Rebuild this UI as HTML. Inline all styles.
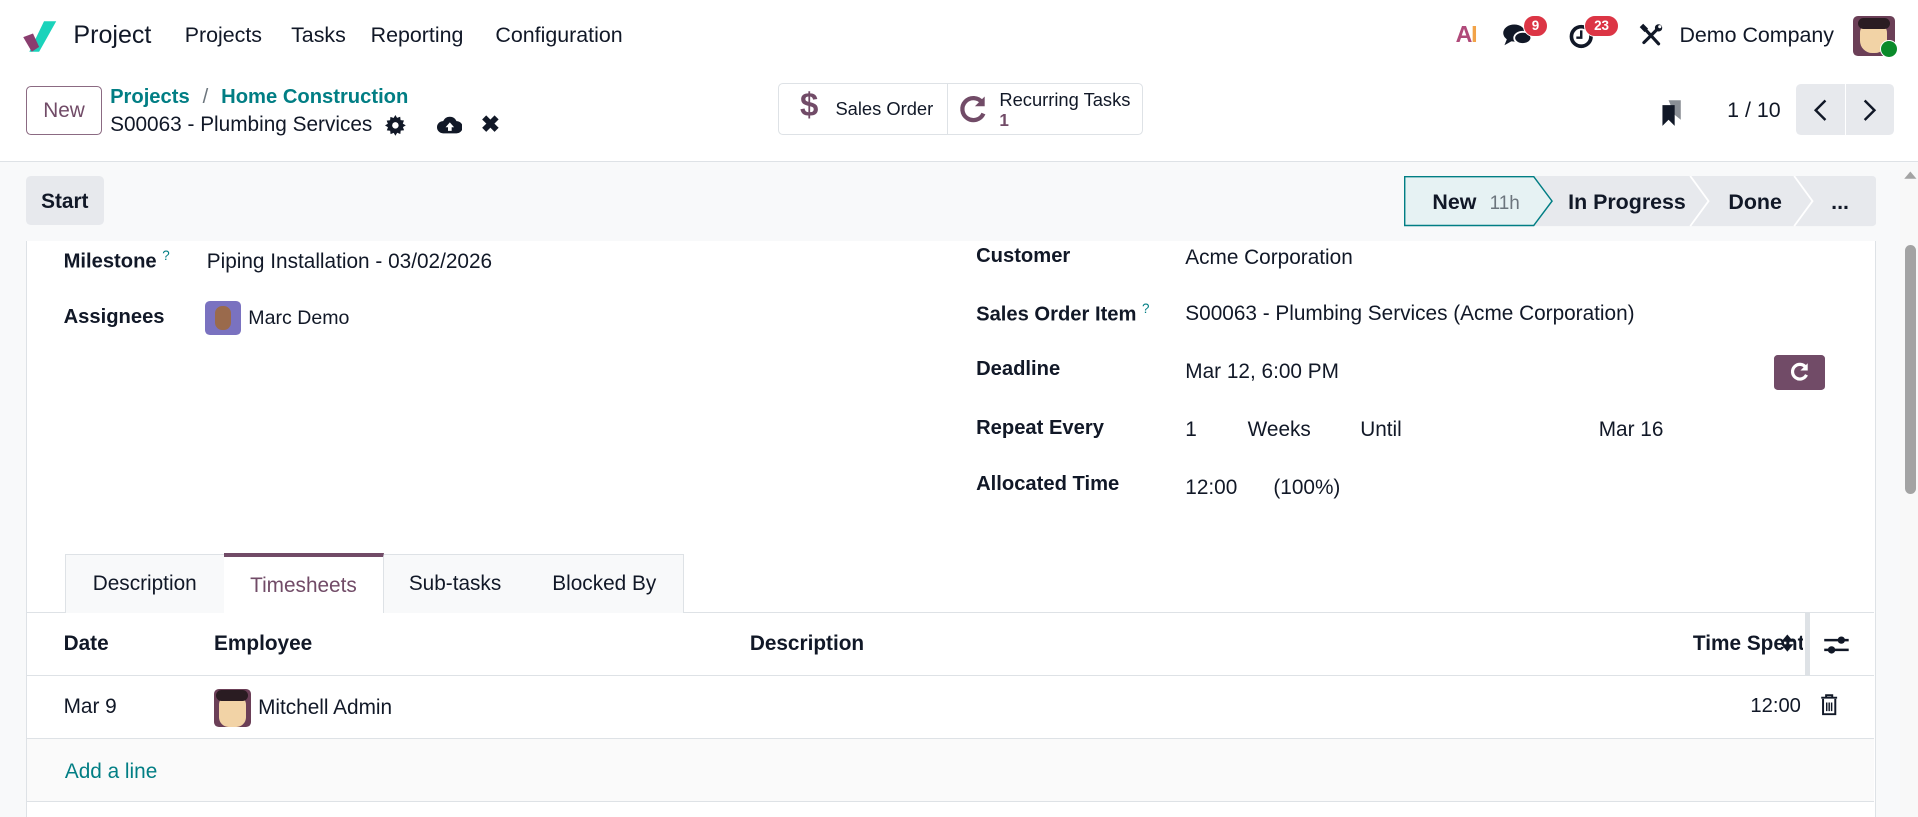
<!DOCTYPE html>
<html><head><meta charset="utf-8">
<style>
html,body{margin:0;padding:0;background:#fff;overflow:hidden}
body{width:1918px;height:817px}
#w{zoom:1.22321;width:1568px;height:668px;position:relative;font-family:"Liberation Sans",sans-serif;color:#111827;font-size:16.5px;overflow:hidden}
.a{position:absolute;white-space:nowrap}
.b{font-weight:bold}
.teal{color:#017E84}
.nav{font-size:17.5px;top:19px}
.badge{position:absolute;background:#dc3545;color:#fff;font-size:11px;font-weight:bold;border-radius:9px;height:17px;line-height:17px;text-align:center;border:1.5px solid #fff}
.lbl{font-weight:bold;font-size:16.5px}
</style></head><body><div id="w">
<!-- navbar -->
<svg class="a" style="left:18px;top:16px" width="30" height="27" viewBox="0 0 30 27"><path d="M18 1 L28 1 L14 26 L6 26 Z" fill="#1ad3bb"/><path d="M1 14 L9 11 L14 22 L8 26 Z" fill="#8a3e6f"/></svg>
<div class="a" style="left:60px;top:17px;font-size:20.5px">Project</div>
<div class="a nav" style="left:151px">Projects</div>
<div class="a nav" style="left:238px">Tasks</div>
<div class="a nav" style="left:303px">Reporting</div>
<div class="a nav" style="left:405px">Configuration</div>
<div class="a b" style="left:1190px;top:17px;font-size:19px;color:#b04a7a;letter-spacing:-1px">A<span style="color:#f2a348">I</span></div>
<svg class="a" style="left:1228px;top:18px" width="26" height="22" viewBox="0 0 26 22"><ellipse cx="10" cy="9" rx="9" ry="7" fill="#111827"/><path d="M4 14 L2 19 L9 15Z" fill="#111827"/><ellipse cx="17" cy="13" rx="7" ry="5" fill="#111827" stroke="#fff" stroke-width="1.5"/></svg>
<div class="badge" style="left:1245px;top:12px;width:19px">9</div>
<svg class="a" style="left:1283px;top:19px" width="22" height="22" viewBox="0 0 22 22"><circle cx="10" cy="11" r="8" fill="none" stroke="#111827" stroke-width="3"/><path d="M10 6 V12 H6" stroke="#111827" stroke-width="2" fill="none"/></svg>
<div class="badge" style="left:1295px;top:12px;width:27px">23</div>
<svg class="a" style="left:1340px;top:19px" width="20" height="20" viewBox="0 0 20 20"><path d="M4 4 L16 17" stroke="#111827" stroke-width="2.6" stroke-linecap="round"/><path d="M2 2 L6 6" stroke="#111827" stroke-width="4"/><path d="M15 5 L4 16" stroke="#111827" stroke-width="2.6" stroke-linecap="round"/><circle cx="16" cy="4" r="3" fill="#111827"/><circle cx="17" cy="3" r="1.3" fill="#fff"/></svg>
<div class="a" style="left:1373px;top:19px;font-size:17.5px">Demo Company</div>
<div class="a" style="left:1515px;top:13px;width:34px;height:33px;border-radius:4px;background:#6b3f57"><div style="position:absolute;left:6px;top:6px;width:22px;height:24px;background:#f2d3a6;border-radius:8px 8px 10px 10px"></div><div style="position:absolute;left:4px;top:2px;width:26px;height:9px;background:#2a1c22;border-radius:6px"></div></div>
<div class="a" style="left:1537px;top:33px;width:13px;height:13px;border-radius:50%;background:#0a8a2a;border:1.5px solid #fff"></div>
<!-- control panel -->
<div class="a" style="left:21px;top:70px;width:61px;height:39px;border:1px solid #8b6a82;border-radius:4px;color:#714B67;font-size:17px;text-align:center;line-height:39px">New</div>
<div class="a teal" style="left:90px;top:70px;font-size:16.5px;font-weight:bold">Projects <span style="color:#6c757d;font-weight:normal;margin:0 6px">/</span> Home Construction</div>
<div class="a" style="left:90px;top:92px;font-size:17px">S00063 - Plumbing Services</div>
<svg class="a" style="left:315px;top:94px" width="17" height="17" viewBox="0 0 16 16"><path d="M8 0l1.3 2.2 2.4-.9.3 2.6 2.6.3-.9 2.4L16 8l-2.2 1.3.9 2.4-2.6.3-.3 2.6-2.4-.9L8 16l-1.3-2.2-2.4.9-.3-2.6-2.6-.3.9-2.4L0 8l2.2-1.3-.9-2.4 2.6-.3.3-2.6 2.4.9Z" fill="#111827"/><circle cx="8" cy="8" r="2.5" fill="#fff"/></svg>
<svg class="a" style="left:357px;top:94px" width="21" height="16" viewBox="0 0 21 16"><path d="M5 15 A5 5 0 0 1 5 5 A6 6 0 0 1 16 5 A5 5 0 0 1 16 15Z" fill="#111827"/><path d="M10.5 6 L14 10 H12 V13 H9 V10 H7Z" fill="#fff"/></svg>
<div class="a b" style="left:393px;top:91px;font-size:19px">✖</div>
<div class="a" style="left:636px;top:68px;width:297px;height:41px;border:1px solid #dee2e6;border-radius:4px"></div>
<div class="a" style="left:774px;top:69px;width:1px;height:41px;background:#dee2e6"></div>
<div class="a b" style="left:654px;top:70px;font-size:27px;color:#714B67">$</div>
<div class="a" style="left:683px;top:80px;font-size:15px">Sales Order</div>
<svg class="a" style="left:784px;top:77px" width="24" height="24" viewBox="0 0 24 24"><path d="M19 7 A9 9 0 1 0 20 16" fill="none" stroke="#714B67" stroke-width="3.5"/><path d="M21 2 V10 H13Z" fill="#714B67"/></svg>
<div class="a" style="left:817px;top:73px;font-size:15px">Recurring Tasks</div>
<div class="a b" style="left:817px;top:91px;font-size:14px;color:#714B67">1</div>
<svg class="a" style="left:1357px;top:81px" width="20" height="22" viewBox="0 0 20 22"><path d="M7 1 H17 V17 L12 13Z" fill="#8a8f96"/><path d="M2 5 H12 V22 L7 17 L2 22Z" fill="#111827"/></svg>
<div class="a" style="left:1412px;top:80px;font-size:17.5px">1 / 10</div>
<div class="a" style="left:1468px;top:69px;width:80px;height:41px;background:#e7e9ed;border-radius:4px"></div>
<div class="a" style="left:1508px;top:69px;width:1px;height:41px;background:#fff"></div>
<svg class="a" style="left:1481px;top:80px" width="14" height="20" viewBox="0 0 14 20"><path d="M11 2 L3 10 L11 18" fill="none" stroke="#111827" stroke-width="2"/></svg>
<svg class="a" style="left:1521px;top:80px" width="14" height="20" viewBox="0 0 14 20"><path d="M3 2 L11 10 L3 18" fill="none" stroke="#111827" stroke-width="2"/></svg>
<!-- gray area -->
<div class="a" style="left:0;top:132px;width:1568px;height:536px;background:#f8f9fa;border-top:1px solid #dee2e6"></div>
<div class="a b" style="left:21px;top:144px;width:64px;height:40px;background:#e7e9ed;border-radius:4px;line-height:42px;text-align:center;font-size:17px">Start</div>
<svg class="a" style="left:1148px;top:144px" width="386" height="42" viewBox="0 0 386 42">
<rect x="0" y="0" width="386" height="41" rx="3" fill="#e7e9ed"/>
<path d="M0.5 0.5 H106 L121 20.5 L106 40.5 H0.5Z" fill="#e6f2f3" stroke="#017E84" stroke-width="1.2"/>
<path d="M234 0 L249 20.5 L234 41" fill="none" stroke="#fff" stroke-width="1.5"/>
<path d="M319 0 L334 20.5 L319 41" fill="none" stroke="#fff" stroke-width="1.5"/>
</svg>
<div class="a b" style="left:1171px;top:155px;font-size:17.5px">New <span style="color:#6c757d;font-weight:normal;font-size:15.5px;margin-left:6px">11h</span></div>
<div class="a b" style="left:1282px;top:155px;font-size:17.5px">In Progress</div>
<div class="a b" style="left:1413px;top:155px;font-size:17.5px">Done</div>
<div class="a b" style="left:1497px;top:155px;font-size:17.5px">...</div>
<!-- scrollbar -->
<div class="a" style="left:1553px;top:133px;width:15px;height:535px;background:#f8f8f8"></div>
<svg class="a" style="left:1556px;top:138px" width="12" height="10"><path d="M1 8 L6 2 L11 8Z" fill="#a3a3a3"/></svg>
<div class="a" style="left:1557px;top:200px;width:9px;height:204px;background:#a3a3a3;border-radius:5px"></div>
<!-- sheet -->
<div class="a" style="left:21px;top:197px;width:1511px;height:471px;background:#fff;border-left:1px solid #dee2e6;border-right:1px solid #dee2e6"></div>
<div class="a lbl" style="left:52px;top:203px">Milestone <sup class="teal" style="font-size:11px;font-weight:normal">?</sup></div>
<div class="a" style="left:169px;top:204px;font-size:17px">Piping Installation - 03/02/2026</div>
<div class="a lbl" style="left:52px;top:250px">Assignees</div>
<div class="a" style="left:168px;top:246px;width:29px;height:28px;border-radius:4px;background:#7a72c0"><div style="position:absolute;left:8px;top:4px;width:13px;height:20px;background:#9a6a4c;border-radius:6px"></div></div>
<div class="a" style="left:203px;top:251px;font-size:16px">Marc Demo</div>
<div class="a lbl" style="left:798px;top:200px">Customer</div>
<div class="a" style="left:969px;top:201px;font-size:17px">Acme Corporation</div>
<div class="a lbl" style="left:798px;top:246px">Sales Order Item <sup class="teal" style="font-size:11px;font-weight:normal">?</sup></div>
<div class="a" style="left:969px;top:247px;font-size:17px">S00063 - Plumbing Services (Acme Corporation)</div>
<div class="a lbl" style="left:798px;top:293px">Deadline</div>
<div class="a" style="left:969px;top:294px;font-size:17px">Mar 12, 6:00 PM</div>
<div class="a" style="left:1450px;top:290px;width:42px;height:29px;background:#714B67;border-radius:3px"></div>
<svg class="a" style="left:1463px;top:296px" width="16" height="16" viewBox="0 0 16 16"><path d="M13 4.5 A6 6 0 1 0 13.5 10.5" fill="none" stroke="#fff" stroke-width="2.6"/><path d="M14.5 1 V7 H8.5Z" fill="#fff"/></svg>
<div class="a lbl" style="left:798px;top:341px">Repeat Every</div>
<div class="a" style="left:969px;top:342px;font-size:17px">1</div>
<div class="a" style="left:1020px;top:342px;font-size:17px">Weeks</div>
<div class="a" style="left:1112px;top:342px;font-size:17px">Until</div>
<div class="a" style="left:1307px;top:342px;font-size:17px">Mar 16</div>
<div class="a lbl" style="left:798px;top:387px">Allocated Time</div>
<div class="a" style="left:969px;top:389px;font-size:17px">12:00</div>
<div class="a" style="left:1041px;top:389px;font-size:17px">(100%)</div>
<!-- tabs -->
<div class="a" style="left:22px;top:500px;width:1510px;height:1px;background:#dee2e6"></div>
<div class="a" style="left:53px;top:453px;width:129px;height:47px;background:#f8f9fa;border:1px solid #dee2e6;border-bottom:none;line-height:48px;text-align:center;font-size:17px">Description</div>
<div class="a" style="left:183px;top:452px;width:131px;height:49px;background:#fff;border-top:4px solid #714B67;border-right:1px solid #dee2e6;line-height:48px;text-align:center;font-size:17px;color:#714B67;box-sizing:border-box">Timesheets</div>
<div class="a" style="left:314px;top:453px;width:116px;height:47px;background:#f8f9fa;border:1px solid #dee2e6;border-bottom:none;border-left:none;line-height:48px;text-align:center;font-size:17px">Sub-tasks</div>
<div class="a" style="left:430px;top:453px;width:128px;height:47px;background:#f8f9fa;border:1px solid #dee2e6;border-bottom:none;border-left:none;line-height:48px;text-align:center;font-size:17px">Blocked By</div>
<!-- table -->
<div class="a b" style="left:52px;top:517px;font-size:17px">Date</div>
<div class="a b" style="left:175px;top:517px;font-size:17px">Employee</div>
<div class="a b" style="left:613px;top:517px;font-size:17px">Description</div>
<div class="a b" style="left:1384px;top:517px;font-size:17px;width:90px;overflow:hidden">Time Spent</div>
<svg class="a" style="left:1455px;top:517px" width="12" height="18"><path d="M1 8 L6 2 L11 8Z M1 10 L6 16 L11 10Z" fill="#111827"/></svg>
<div class="a" style="left:1476px;top:501px;width:4px;height:51px;background:#dee2e6"></div>
<svg class="a" style="left:1490px;top:518px" width="22" height="18" viewBox="0 0 22 18"><path d="M1 5 H21 M1 13 H21" stroke="#111827" stroke-width="2"/><circle cx="15" cy="5" r="3" fill="#111827"/><circle cx="7" cy="13" r="3" fill="#111827"/></svg>
<div class="a" style="left:22px;top:552px;width:1510px;height:1px;background:#dee2e6"></div>
<div class="a" style="left:52px;top:568px;font-size:17px">Mar 9</div>
<div class="a" style="left:175px;top:563px;width:30px;height:31px;border-radius:4px;background:#6b3f57;overflow:hidden"><div style="position:absolute;left:4px;top:5px;width:22px;height:26px;background:#f2d3a6;border-radius:8px"></div><div style="position:absolute;left:2px;top:1px;width:26px;height:9px;background:#2a1c22;border-radius:5px"></div></div>
<div class="a" style="left:211px;top:569px;font-size:17px">Mitchell Admin</div>
<div class="a" style="left:1431px;top:568px;font-size:16.5px">12:00</div>
<svg class="a" style="left:1488px;top:567px" width="15" height="18" viewBox="0 0 15 18"><path d="M1 3 H14 M5 3 V1 H10 V3 M2.5 4 V16.5 H12.5 V4" fill="none" stroke="#111827" stroke-width="1.6"/><path d="M5.5 7 V14 M7.5 7 V14 M9.5 7 V14" stroke="#111827" stroke-width="1.2"/></svg>
<div class="a" style="left:22px;top:603px;width:1510px;height:51px;background:#fafafa;border-top:1px solid #dee2e6;border-bottom:1px solid #dee2e6"></div>
<div class="a teal" style="left:53px;top:621px;font-size:17px">Add a line</div>
</div></body></html>
